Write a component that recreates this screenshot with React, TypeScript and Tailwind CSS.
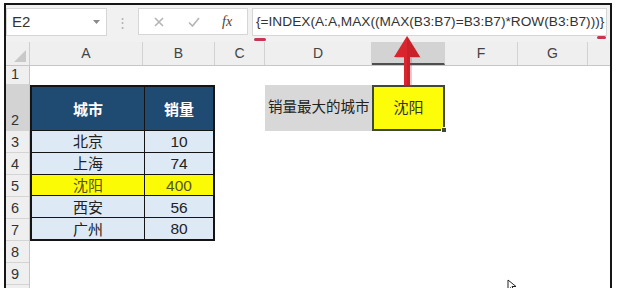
import { ReactNode } from 'react'

const cjk = "font-['Liberation_Sans','Noto_Sans_CJK_SC',sans-serif]"

const COLS = [
  { name: 'A', w: 'w-[113px]' },
  { name: 'B', w: 'w-[72px]' },
  { name: 'C', w: 'w-[50px]' },
  { name: 'D', w: 'w-[107px]' },
  { name: 'E', w: 'w-[73px]', active: true },
  { name: 'F', w: 'w-[73px]' },
  { name: 'G', w: 'w-[70px]' },
]

const ROWS = [
  { n: '1', h: 'h-[19px]' },
  { n: '2', h: 'h-[46px]', active: true },
  { n: '3', h: 'h-[22px]' },
  { n: '4', h: 'h-[22px]' },
  { n: '5', h: 'h-[22px]' },
  { n: '6', h: 'h-[22px]' },
  { n: '7', h: 'h-[22px]' },
  { n: '8', h: 'h-[22px]' },
  { n: '9', h: 'h-[22px]' },
  { n: '', h: 'h-[22px]' },
]

const DATA = [
  { city: '北京', sales: '10' },
  { city: '上海', sales: '74' },
  { city: '沈阳', sales: '400', hit: true },
  { city: '西安', sales: '56' },
  { city: '广州', sales: '80' },
]

function Toolbar() {
  return (
    <div className="flex h-[37px] shrink-0 items-start bg-[#f1f1f1] pt-[3px]">
      <div className="flex h-[28px] w-[101px] items-center justify-between border border-[#d6d6d6] bg-white pl-[5px] pr-[6px]">
        <span className="font-['Liberation_Sans',sans-serif] text-[15px] text-[#333]">E2</span>
        <svg width="7" height="4" viewBox="0 0 7 4">
          <path d="M0 0h7L3.5 4z" fill="#8a8a8a" />
        </svg>
      </div>
      <div className="flex h-[28px] w-[31px] items-center justify-center text-[13px] leading-none text-[#b0b0b0]">⋮</div>
      <div className="flex h-[27px] w-[110px] items-center border border-[#d6d6d6] bg-white pl-[14px]">
        <svg width="10" height="10" viewBox="0 0 10 10" className="ml-[1px]">
          <path d="M1 1l8 8M9 1l-8 8" stroke="#b4b4b4" strokeWidth="1.6" />
        </svg>
        <svg width="12" height="10" viewBox="0 0 12 10" className="ml-[24px]">
          <path d="M1 5.5l3.5 3.5L11 1" stroke="#b4b4b4" strokeWidth="1.6" fill="none" />
        </svg>
        <span className="ml-[22px] font-['Liberation_Serif',serif] text-[14px] italic text-[#444]">fx</span>
      </div>
      <div className="ml-[4px] flex h-[28px] w-[355px] items-center border border-[#d6d6d6] bg-white pl-[3px]">
        <span className="whitespace-nowrap font-['Liberation_Sans',sans-serif] text-[13.7px] text-[#333]">
          {'{=INDEX(A:A,MAX((MAX(B3:B7)=B3:B7)*ROW(B3:B7)))}'}
        </span>
      </div>
    </div>
  )
}

function ColumnHeaders() {
  return (
    <div className="flex h-[24px] shrink-0 border-b border-[#c6c6c6] bg-[#efefef] font-['Liberation_Sans',sans-serif] text-[14px] text-[#444]">
      <div className="relative w-[24px] border-r border-[#cfcfcf]">
        <svg width="12" height="12" viewBox="0 0 12 12" className="absolute bottom-[3px] right-[3px]">
          <path d="M12 0v12H0z" fill="#c9c9c9" />
        </svg>
      </div>
      {COLS.map((c) => (
        <div
          key={c.name}
          className={`${c.w} flex items-center justify-center border-r border-[#d2d2d2] ${
            c.active ? 'border-b-2 border-b-[#4e4e4e] bg-[#d3d3d3]' : ''
          }`}>
          {c.active ? '' : c.name}
        </div>
      ))}
      <div className="flex-1" />
    </div>
  )
}

function Cell({ children, className }: { children?: ReactNode; className?: string }) {
  return <div className={`flex min-h-0 items-center justify-center leading-none ${className ?? ''}`}>{children}</div>
}

function SalesTable() {
  return (
    <div className="col-span-2 col-start-1 row-span-6 row-start-2 grid grid-cols-[112px_1fr] grid-rows-[43px_repeat(5,minmax(0,1fr))] gap-[1px] border-2 border-[#141414] bg-[#141414]">
      <Cell className={`${cjk} bg-[#1f4a72] pt-[2px] text-[15px] font-bold text-white`}>城市</Cell>
      <Cell className={`${cjk} bg-[#1f4a72] pt-[2px] text-[15px] font-bold text-white`}>销量</Cell>
      {DATA.map((d) => (
        <div key={d.city} className="contents">
          <Cell className={`${cjk} pt-[1px] text-[15px] ${d.hit ? 'bg-[#fbfb06] text-[#55551a]' : 'bg-[#dde9f5] text-[#222]'}`}>
            {d.city}
          </Cell>
          <Cell
            className={`pt-[1px] font-['Liberation_Sans',sans-serif] text-[15.5px] ${
              d.hit ? 'bg-[#fbfb06] text-[#55551a]' : 'bg-[#dde9f5] text-[#222]'
            }`}>
            {d.sales}
          </Cell>
        </div>
      ))}
    </div>
  )
}

function Sheet() {
  return (
    <div className="flex min-h-0 flex-1">
      <div className="flex w-[24px] flex-col border-r border-[#c6c6c6] bg-[#efefef] font-['Liberation_Sans',sans-serif] text-[14.5px] text-[#333]">
        {ROWS.map((r, i) => (
          <div
            key={i}
            className={`${r.h} flex shrink-0 items-end border-b border-[#d4d4d4] pb-[1px] pl-[5px] leading-[18px] ${
              r.active ? 'bg-[#d3d3d3]' : ''
            }`}>
            {r.n}
          </div>
        ))}
      </div>
      <div className="grid flex-1 grid-cols-[113px_72px_50px_107px_73px_73px_70px_1fr] grid-rows-[19px_46px_repeat(8,22px)] bg-white">
        <SalesTable />
        <div className={`col-start-4 row-start-2 flex items-center bg-[#d8d8d8] pl-[3px] ${cjk} whitespace-nowrap text-[14.5px] text-[#222]`}>
          销量最大的城市
        </div>
        <div className={`relative col-start-5 row-start-2 flex items-center justify-center border-2 border-[#3e4a36] bg-[#fdfd0a] ${cjk} text-[15px] text-[#333]`}>
          沈阳
          <span className="absolute bottom-[-4px] right-[-4px] h-[6px] w-[6px] border border-white bg-[#3e4a36]" />
        </div>
      </div>
    </div>
  )
}

export default function App() {
  return (
    <div className="relative h-[288px] w-[617px] overflow-hidden bg-white pl-[4px] pt-[3px]">
      <div className="flex h-[285px] w-[608px] flex-col overflow-hidden border-2 border-b-0 border-[#161616]">
        <Toolbar />
        <ColumnHeaders />
        <Sheet />
      </div>

      {/* red marks from the article */}
      <span className="absolute left-[254px] top-[38px] h-[3px] w-[12px] rounded-sm bg-[#c9344f]" />
      <span className="absolute left-[597px] top-[36px] h-[3px] w-[9px] rounded-sm bg-[#c9344f]" />

      <svg className="absolute left-[392px] top-[35px]" width="30" height="52" viewBox="0 0 30 52">
        <path d="M15 1L28 22H19V51H11V22H2z" fill="#d9262e" opacity="0.25" transform="translate(1 1)" />
        <path d="M15 1L28 22H18V50H12V22H2z" fill="#d9262e" />
        <path d="M15 1L28 22H18V50H15z" fill="#b81c24" opacity="0.5" />
      </svg>

      <svg className="absolute left-[507px] top-[279px]" width="10" height="12" viewBox="0 0 10 12">
        <path d="M1 1v10l2.5-2.5L5.5 12l1.5-.7-2-3.8H9z" fill="#fff" stroke="#222" strokeWidth="1" />
      </svg>
    </div>
  )
}
